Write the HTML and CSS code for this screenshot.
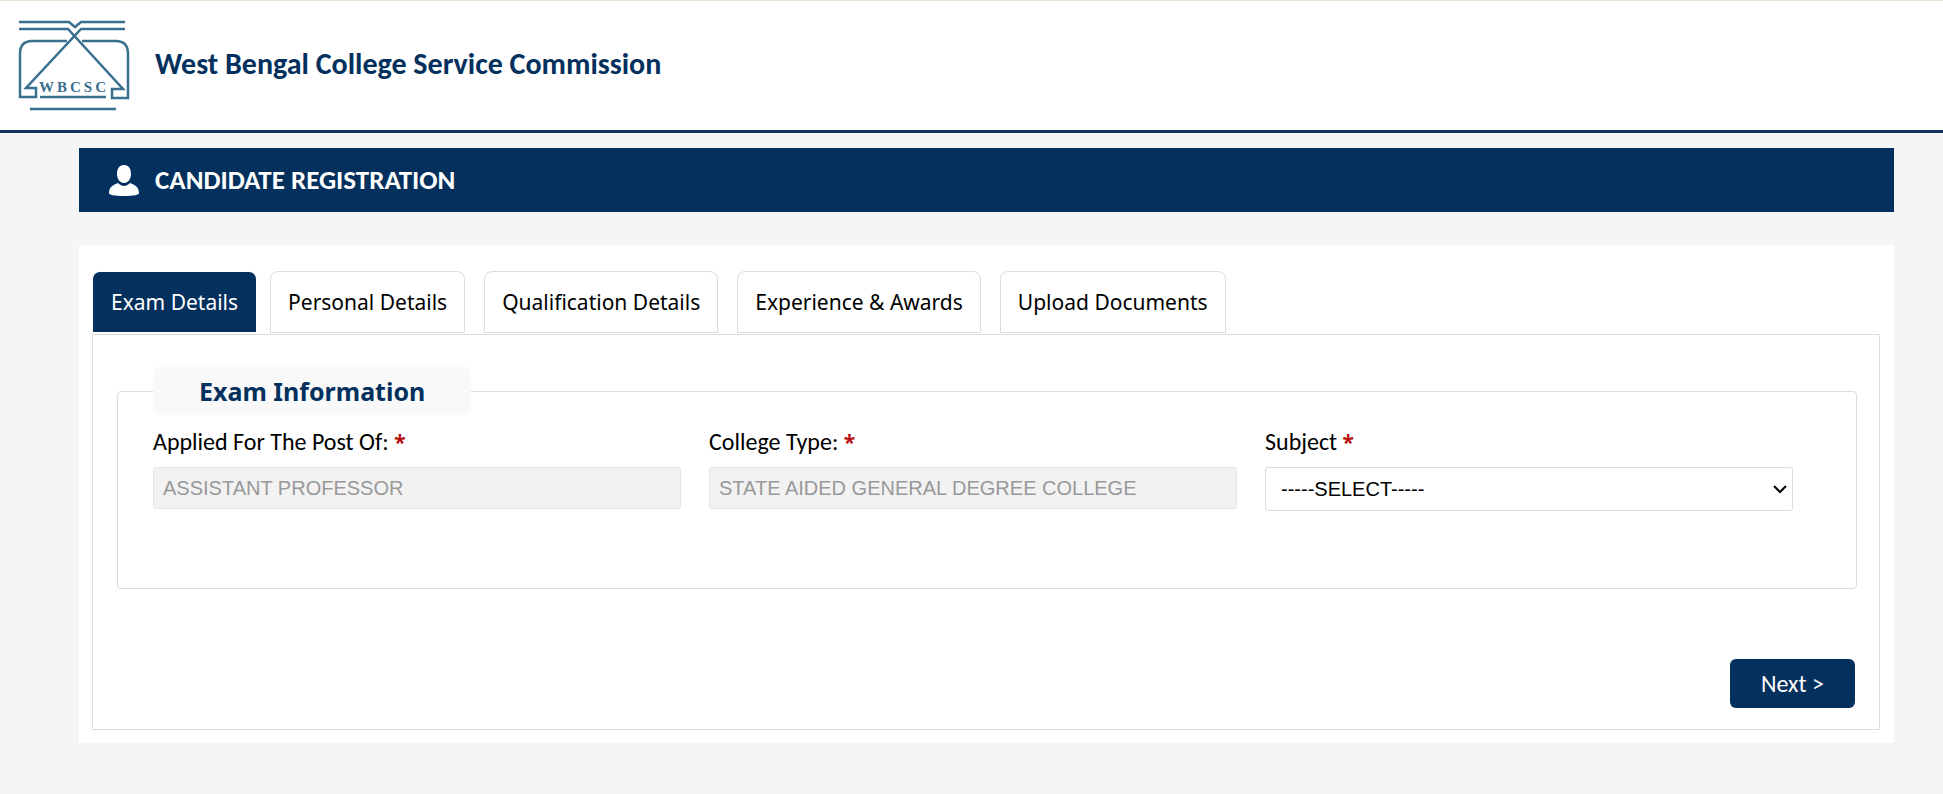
FILE: index.html
```html
<!DOCTYPE html>
<html lang="en">
<head>
  <meta charset="UTF-8">
  <meta name="viewport" content="width=device-width, initial-scale=1.0">
  <title>West Bengal College Service Commission</title>
  <link rel="stylesheet" href="styles.css">
</head>
<body>
  <header class="site-header">
    <svg class="logo" viewBox="0 0 116 96" role="img" aria-label="WBCSC">
      <g fill="none" stroke="#3a708f" stroke-width="2.5">
        <path d="M4 6H54L60 11L66 6H110"/>
        <path d="M4 13H53L108 73H97V82H113V38Q113 25 101 25H67"/>
        <path d="M110 13H66L11 72H21V81H5V38Q5 25 17 25H52"/>
        <path d="M25 81H91M15 93H101"/>
      </g>
      <text x="24" y="76">WBCSC</text>
    </svg>
    <h1>West Bengal College Service Commission</h1>
  </header>

  <main>
    <div class="page-title">
      <svg class="user-icon" viewBox="0 0 30 31" aria-hidden="true">
        <path fill="#fff" d="M15 0C10 0 8 4 8 9C8 14 11 18 15 18S22 14 22 9C22 4 20 0 15 0ZM9 18C4 20 0 22 0 28C0 30 5 31 15 31S30 30 30 28C30 22 26 20 21 18C19 20 17 21 15 21S11 20 9 18Z"/>
      </svg>
      <h2>CANDIDATE REGISTRATION</h2>
    </div>

    <div class="card">
      <nav class="tabs">
        <button type="button" class="tab active">Exam Details</button>
        <button type="button" class="tab">Personal Details</button>
        <button type="button" class="tab">Qualification Details</button>
        <button type="button" class="tab">Experience &amp; Awards</button>
        <button type="button" class="tab">Upload Documents</button>
      </nav>

      <form class="panel">
        <fieldset>
          <legend>Exam Information</legend>
          <div class="fields">
            <div class="field">
              <label for="post">Applied For The Post Of: <span class="required">*</span></label>
              <input type="text" id="post" name="post" value="ASSISTANT PROFESSOR" disabled>
            </div>
            <div class="field">
              <label for="college">College Type: <span class="required">*</span></label>
              <input type="text" id="college" name="college" value="STATE AIDED GENERAL DEGREE COLLEGE" disabled>
            </div>
            <div class="field">
              <label for="subject">Subject <span class="required">*</span></label>
              <div class="select-wrap">
                <select id="subject" name="subject">
                  <option>-----SELECT-----</option>
                </select>
                <svg class="chevron" viewBox="0 0 14 9" aria-hidden="true">
                  <path d="M1 1L7 7L13 1" fill="none" stroke="#000" stroke-width="2"/>
                </svg>
              </div>
            </div>
          </div>
        </fieldset>
        <div class="actions">
          <button type="button" class="next">Next &gt;</button>
        </div>
      </form>
    </div>
  </main>
</body>
</html>
```
FILE: styles.css
```css
* {
  box-sizing: border-box;
}
body {
  margin: 0;
  background-color: #f5f5f5;
  color: #000;
  font-family: Calibri, Carlito, Lato, sans-serif;
  font-size: 24px;
}
h1, h2 {
  margin: 0;
  line-height: 32px;
}
.site-header {
  display: flex;
  align-items: center;
  gap: 24px;
  height: 133px;
  padding: 0 15px 3px;
  background-color: #fff;
  border-top: 1px solid #e9dfd3;
  border-bottom: 3px solid #14315a;
}
.site-header h1 {
  color: #03305d;
  font-size: 30px;
}
.logo {
  width: 116px;
  height: 96px;
}
.logo text {
  font-family: "Liberation Serif", serif;
  font-size: 15px;
  font-weight: bold;
  letter-spacing: 3px;
  fill: #3a708f;
}
main {
  margin: 15px 49px 51px 79px;
}
.page-title {
  display: flex;
  align-items: center;
  gap: 16px;
  height: 64px;
  padding: 0 30px;
  background-color: #03305d;
  color: #fff;
}
.page-title h2 {
  font-size: 27px;
}
.user-icon {
  width: 30px;
  height: 31px;
}
.card {
  margin-top: 33px;
  padding: 26px 14px 13px 13px;
  background-color: #fff;
}
.tabs {
  display: flex;
  gap: 19px;
  margin-bottom: 1px;
}
.tab {
  height: 62px;
  padding: 0 17px;
  background-color: #fff;
  border: 1px solid #dcdcdc;
  border-radius: 8px 8px 0 0;
  color: #000;
  font-family: Tahoma, "Noto Sans", sans-serif;
  font-size: 21px;
  cursor: pointer;
}
.tab.active {
  margin-right: -6px;
  padding: 0 18px;
  background-color: #03305d;
  border-color: #fff;
  color: #fff;
}
.panel {
  padding: 32px 22px 21px 24px;
  border: 1px solid #dcdcdc;
}
fieldset {
  margin: 0;
  padding: 11px 63px 77px 35px;
  border: 1px solid #dcdcdc;
  border-radius: 4px;
}
legend {
  padding: 0 46px;
  background-color: #f9f9f9;
  border-radius: 6px;
  color: #03305d;
  font-family: Verdana, "Noto Sans", sans-serif;
  font-size: 25px;
  font-weight: bold;
  line-height: 48px;
}
.fields {
  display: grid;
  grid-template-columns: repeat(3, 1fr);
  gap: 28px;
}
label {
  display: block;
  height: 32px;
  margin-bottom: 9px;
  line-height: 32px;
}
.required {
  color: #b80c0c;
  font-family: Tahoma, "Noto Sans", sans-serif;
  font-size: 21px;
  font-weight: bold;
  line-height: 1;
}
input, select {
  display: block;
  width: 100%;
  border: 1px solid #dcdcdc;
  border-radius: 3px;
  font-family: Arial, "Liberation Sans", sans-serif;
  font-size: 20px;
}
input {
  height: 42px;
  padding: 0 9px;
}
input:disabled {
  background-color: #f2f2f2;
  border-color: #e4e4e4;
  color: #999;
}
select {
  height: 44px;
  padding: 0 15px;
  background-color: #fff;
  color: #000;
  appearance: none;
}
.select-wrap {
  position: relative;
}
.chevron {
  position: absolute;
  top: 18px;
  right: 6px;
  width: 14px;
  height: 9px;
  pointer-events: none;
}
.actions {
  display: flex;
  justify-content: flex-end;
  padding: 70px 2px 0 0;
}
.next {
  width: 125px;
  height: 49px;
  background-color: #03305d;
  border: none;
  border-radius: 6px;
  color: #fff;
  font-family: inherit;
  font-size: 24px;
  cursor: pointer;
}
```
